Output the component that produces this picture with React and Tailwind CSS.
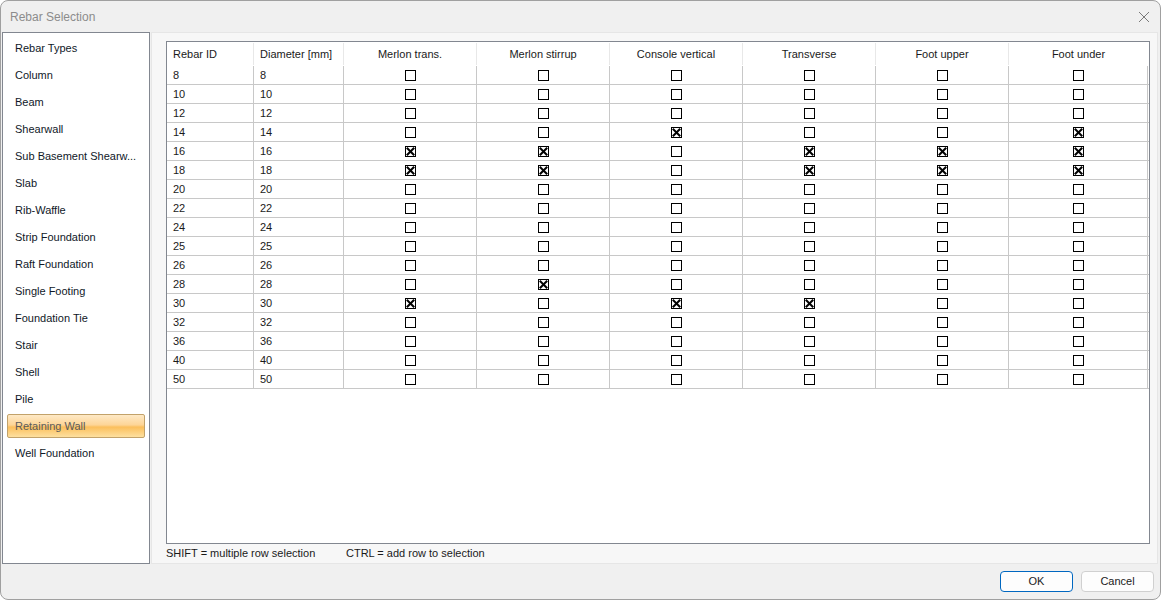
import React from "react";

const navItems = [
  "Rebar Types",
  "Column",
  "Beam",
  "Shearwall",
  "Sub Basement Shearw...",
  "Slab",
  "Rib-Waffle",
  "Strip Foundation",
  "Raft Foundation",
  "Single Footing",
  "Foundation Tie",
  "Stair",
  "Shell",
  "Pile",
  "Retaining Wall",
  "Well Foundation",
];

const cols = [
  "Merlon trans.",
  "Merlon stirrup",
  "Console vertical",
  "Transverse",
  "Foot upper",
  "Foot under",
];

const ids = [8, 10, 12, 14, 16, 18, 20, 22, 24, 25, 26, 28, 30, 32, 36, 40, 50];

const checked = {
  14: [2, 5],
  16: [0, 1, 3, 4, 5],
  18: [0, 1, 3, 4, 5],
  28: [1],
  30: [0, 2, 3],
};

function Box({ on }) {
  return (
    <svg width="11" height="11" viewBox="0 0 11 11" className="block">
      <rect x="0.5" y="0.5" width="10" height="10" fill="white" stroke="black" strokeWidth="1" />
      {on && (
        <g stroke="black" strokeWidth="2" strokeLinecap="square">
          <line x1="2.5" y1="2.5" x2="8.5" y2="8.5" />
          <line x1="8.5" y1="2.5" x2="2.5" y2="8.5" />
        </g>
      )}
    </svg>
  );
}

const gridCols = "grid grid-cols-[87px_90px_133px_133px_133px_133px_133px_139px]";

export default function App() {
  return (
    <div
      className="w-[1161px] h-[600px] bg-[#f0f0f0] border border-[#a0a0a0] rounded-[8px] flex flex-col overflow-hidden text-[11px] text-[#1a1a1a] whitespace-nowrap"
      style={{ fontFamily: '"Liberation Sans", Arial, sans-serif' }}
    >
      {/* Title bar */}
      <div className="h-[31px] shrink-0 flex items-center justify-between pl-[9px] pr-[10px]">
        <span className="text-[12px] text-[#8c8c8c]">Rebar Selection</span>
        <svg width="12" height="12" viewBox="0 0 12 12">
          <g stroke="#7a7a7a" strokeWidth="1">
            <line x1="1" y1="1" x2="11" y2="11" />
            <line x1="11" y1="1" x2="1" y2="11" />
          </g>
        </svg>
      </div>

      {/* Body */}
      <div className="flex h-[532px] shrink-0">
        {/* Left nav */}
        <div className="ml-[1px] w-[148px] h-[532px] bg-white border border-[#828790] pt-[2px] px-[4px] flex flex-col">
          {navItems.map((t) => {
            const sel = t === "Retaining Wall";
            return (
              <div
                key={t}
                className={
                  sel
                    ? "h-[24px] mt-[1px] mb-[2px] flex items-center pl-[7px] text-[#5a5a5a] border border-[#c2a26a] rounded-[2px] bg-[linear-gradient(180deg,#fee9c6_0%,#fdd597_45%,#fbbf5c_55%,#fde0a0_100%)]"
                    : "h-[27px] flex items-center pl-[8px] text-[#101828]"
                }
              >
                {t}
              </div>
            );
          })}
        </div>

        {/* Right panel */}
        <div className="ml-[1px] flex-1 mr-[2px] bg-[#f7f7f7] border border-[#e6e6e6] flex flex-col pl-[14px] pr-[7px] pt-[8px]">
          <div className="h-[503px] bg-white border border-[#828790] shrink-0 overflow-hidden">
            {/* Header */}
            <div className={`${gridCols} h-[24px] text-[#1a1a1a]`}>
              <div className="flex items-center pl-[6px] border-r border-[#e8e8e8] my-[1px]">Rebar ID</div>
              <div className="flex items-center pl-[6px] border-r border-[#e8e8e8] my-[1px]">Diameter [mm]</div>
              {cols.map((c, i) => (
                <div
                  key={c}
                  className={
                    i < cols.length - 1
                      ? "flex items-center justify-center border-r border-[#e8e8e8] my-[1px]"
                      : "flex items-center justify-center my-[1px]"
                  }
                >
                  {c}
                </div>
              ))}
            </div>
            {/* Rows */}
            {ids.map((id) => {
              const on = checked[id] || [];
              return (
                <div key={id} className={`${gridCols} h-[19px] border-b border-[#c8c8c8]`}>
                  <div className="flex items-center pl-[6px] border-r border-[#c8c8c8]">{id}</div>
                  <div className="flex items-center pl-[6px] border-r border-[#c8c8c8]">{id}</div>
                  {cols.map((c, i) => (
                    <div key={c} className="flex items-center justify-center border-r border-[#c8c8c8]">
                      <Box on={on.includes(i)} />
                    </div>
                  ))}
                </div>
              );
            })}
          </div>
          <div className="h-[21px] flex items-center text-[11px] text-[#1a1a1a]">
            <span className="w-[180px]">SHIFT = multiple row selection</span>
            <span>CTRL = add row to selection</span>
          </div>
        </div>
      </div>

      {/* Bottom bar */}
      <div className="flex-1 flex items-start justify-end pt-[7px] pr-[6px] gap-[8px]">
        <button className="w-[73px] h-[21px] bg-[#fdfdfd] border border-[#0067c0] rounded-[4px] text-[11px] text-[#1a1a1a] flex items-center justify-center">
          OK
        </button>
        <button className="w-[73px] h-[21px] bg-[#fdfdfd] border border-[#d0d0d0] rounded-[4px] text-[11px] text-[#1a1a1a] flex items-center justify-center">
          Cancel
        </button>
      </div>
    </div>
  );
}
